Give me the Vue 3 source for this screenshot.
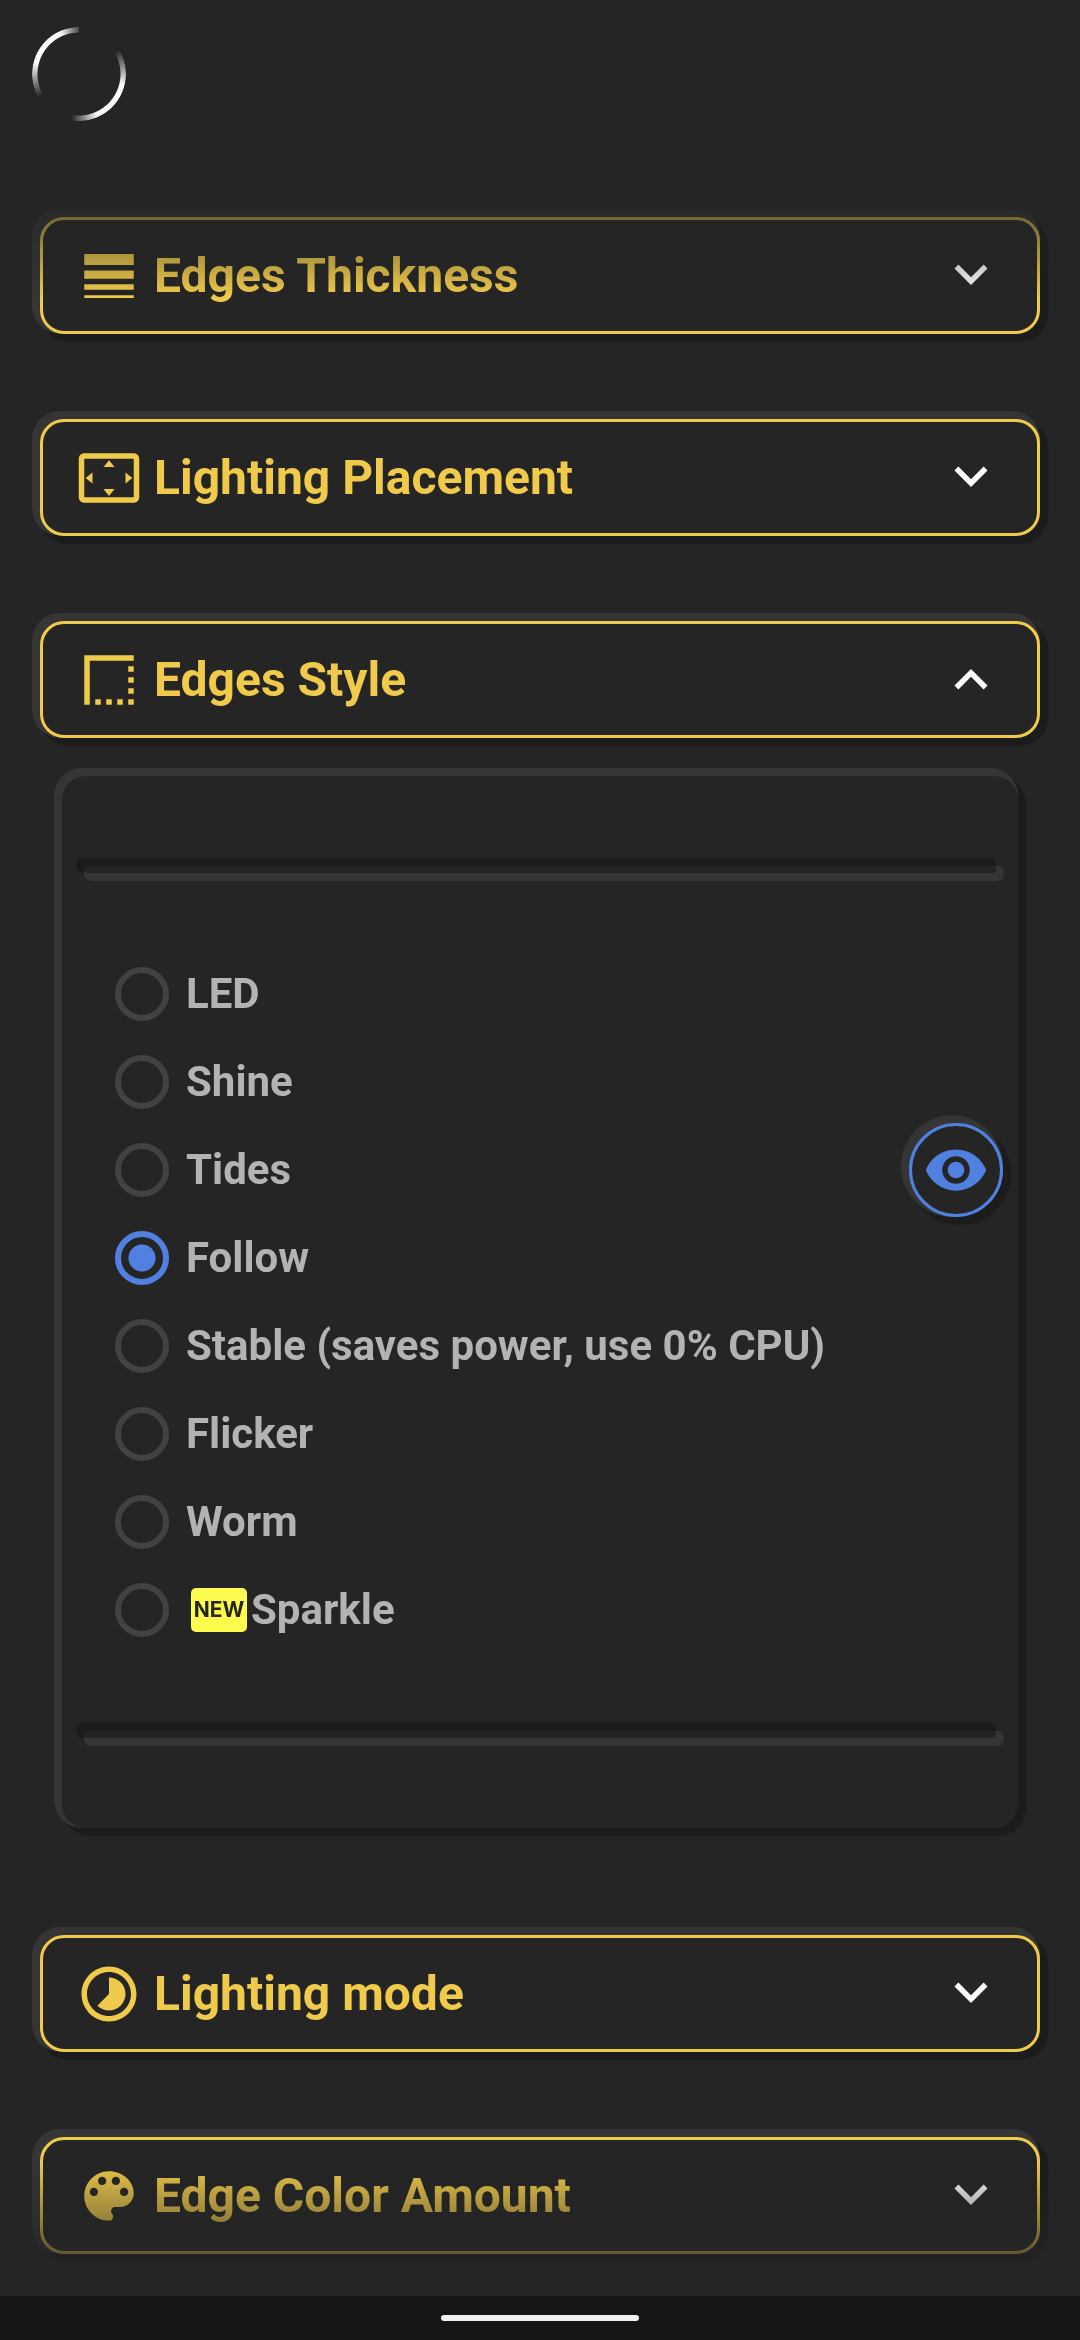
<script setup>
import { ref } from 'vue'

const icons = {
  thickness: 'M3 17h18v-2H3v2zm0 3h18v-1H3v1zm0-7h18v-3H3v3zm0-9v4h18V4H3z',
  placement:
    'M12.01 5.5L10 8h4l-1.99-2.5zM18 10v4l2.5-1.99L18 10zM6 10l-2.5 2.01L6 14v-4zm8 6h-4l2.01 2.5L14 16zm7-13H3c-1.1 0-2 .9-2 2v14c0 1.1.9 2 2 2h18c1.1 0 2-.9 2-2V5c0-1.1-.9-2-2-2zm0 16.01H3V4.99h18v14.02z',
  style:
    'M15 21h2v-2h-2v2zm4 0h2v-2h-2v2zM7 21h2v-2H7v2zm4 0h2v-2h-2v2zm8-4h2v-2h-2v2zm0-4h2v-2h-2v2zM3 3v18h2V5h16V3H3zm16 6h2V7h-2v2z',
  mode:
    'M16.24 7.76C15.07 6.59 13.54 6 12 6v6l-4.24 4.24c2.34 2.34 6.14 2.34 8.49 0 2.34-2.34 2.34-6.14-.01-8.48zM12 2C6.48 2 2 6.48 2 12s4.48 10 10 10 10-4.48 10-10S17.52 2 12 2zm0 18c-4.42 0-8-3.58-8-8s3.58-8 8-8 8 3.58 8 8-3.58 8-8 8z',
  palette:
    'M12 3c-4.97 0-9 4.03-9 9s4.03 9 9 9c.83 0 1.5-.67 1.5-1.5 0-.39-.15-.74-.39-1.01-.23-.26-.38-.61-.38-.99 0-.83.67-1.5 1.5-1.5H16c2.76 0 5-2.24 5-5 0-4.42-4.03-8-9-8zm-5.5 9c-.83 0-1.5-.67-1.5-1.5S5.67 9 6.5 9 8 9.67 8 10.5 7.33 12 6.5 12zm3-4C8.67 8 8 7.33 8 6.5S8.67 5 9.5 5s1.5.67 1.5 1.5S10.33 8 9.5 8zm5 0c-.83 0-1.5-.67-1.5-1.5S13.67 5 14.5 5s1.5.67 1.5 1.5S15.33 8 14.5 8zm3 4c-.83 0-1.5-.67-1.5-1.5S16.67 9 17.5 9s1.5.67 1.5 1.5-.67 1.5-1.5 1.5z',
  down: 'M7.41 7.84L12 12.42l4.59-4.58L18 9.25l-6 6-6-6z',
  up: 'M7.41 15.41L12 10.83l4.59 4.58L18 14l-6-6-6 6z',
  eye: 'M12 4.5C7 4.5 2.73 7.61 1 12c1.73 4.39 6 7.5 11 7.5s9.27-3.11 11-7.5c-1.73-4.39-6-7.5-11-7.5zM12 17c-2.76 0-5-2.24-5-5s2.24-5 5-5 5 2.24 5 5-2.24 5-5 5zm0-8c-1.66 0-3 1.34-3 3s1.34 3 3 3 3-1.34 3-3-1.34-3-3-3z',
}

const sections = [
  { id: 'thickness', title: 'Edges Thickness' },
  { id: 'placement', title: 'Lighting Placement' },
  { id: 'style', title: 'Edges Style' },
  { id: 'mode', title: 'Lighting mode' },
  { id: 'palette', title: 'Edge Color Amount' },
]

const styles = [
  { label: 'LED' },
  { label: 'Shine' },
  { label: 'Tides' },
  { label: 'Follow' },
  { label: 'Stable (saves power, use 0% CPU)' },
  { label: 'Flicker' },
  { label: 'Worm' },
  { label: 'Sparkle', isNew: true },
]

const open = ref('style')
const selected = ref('Follow')

function toggle(id) {
  open.value = open.value === id ? '' : id
}
</script>

<template>
  <div class="page">
    <header class="top">
      <div class="spinner" role="progressbar" aria-label="Loading"></div>
    </header>

    <main class="list">
      <section v-for="s in sections" :key="s.id" class="section">
        <button class="head" type="button" :aria-expanded="open === s.id" @click="toggle(s.id)">
          <svg class="icon" viewBox="0 0 24 24" aria-hidden="true"><path :d="icons[s.id]" /></svg>
          <span class="title">{{ s.title }}</span>
          <svg class="icon chevron" viewBox="0 0 24 24" aria-hidden="true">
            <path :d="open === s.id ? icons.up : icons.down" />
          </svg>
        </button>

        <div v-if="s.id === 'style' && open === 'style'" class="panel">
          <div class="groove"></div>
          <fieldset class="options" aria-label="Edges Style">
            <label v-for="o in styles" :key="o.label" class="option">
              <input v-model="selected" class="radio" type="radio" name="edge-style" :value="o.label" />
              <span v-if="o.isNew" class="badge">NEW</span>
              <span>{{ o.label }}</span>
            </label>
          </fieldset>
          <div class="groove"></div>
        </div>
      </section>
    </main>

    <button class="preview" type="button" aria-label="Preview">
      <svg class="icon" viewBox="0 0 24 24" aria-hidden="true"><path :d="icons.eye" /></svg>
    </button>

    <footer class="navbar"><div class="handle"></div></footer>
  </div>
</template>

<style>
body {
  background: #252525;
}
</style>

<style scoped>
.page {
  --base: #252525;
  --light: #353535;
  --dark: #1c1c1c;
  --gold: #f0cb4b;
  --blue: #5080e0;
  display: flex;
  flex-direction: column;
  min-height: 100vh;
  background: var(--base);
  font-family: Roboto, 'Noto Sans', sans-serif;
  font-weight: 700;
}

.page * {
  box-sizing: border-box;
}

.top {
  height: 162px;
  padding: 27px 32px;
}

.spinner {
  width: 94px;
  height: 94px;
  border-radius: 50%;
  background: conic-gradient(
    transparent 5deg,
    transparent 58deg,
    #fff 105deg,
    #fff 155deg,
    transparent 190deg,
    transparent 240deg,
    #fff 285deg,
    #fff 335deg,
    transparent 365deg
  );
  mask-image: radial-gradient(closest-side, transparent 41px, #000 42px);
}

.list {
  flex: 1;
  display: flex;
  flex-direction: column;
  gap: 85px;
  padding: 55px 40px 42px;
  mask-image: linear-gradient(transparent, #000 137px, #000 calc(100% - 137px), transparent);
}

.head {
  display: flex;
  align-items: center;
  gap: 12px;
  width: 100%;
  height: 117px;
  padding: 0 33px;
  border: 3px solid var(--gold);
  border-radius: 24px;
  background: var(--base);
  box-shadow: -4px -4px 0 4px var(--light), 4px 4px 1px 4px var(--dark);
  color: var(--gold);
  font: inherit;
  font-size: 48px;
  line-height: 60px;
  text-align: left;
}

.icon {
  flex: none;
  width: 66px;
  height: 66px;
  fill: currentColor;
}

.title {
  flex: 1;
}

.chevron {
  color: #fff;
}

.panel {
  margin: 38px 22px 22px;
  padding: 90px 22px;
  border-radius: 24px;
  background: var(--base);
  box-shadow: -4px -4px 0 4px var(--light), 4px 4px 1px 4px var(--dark);
}

.groove {
  height: 7px;
  border-radius: 3px;
  background: #232323;
  box-shadow: 4px 4px 0 4px var(--light), -4px -4px 1px 4px var(--dark);
}

.options {
  margin: 77px 0;
  padding: 0 31px;
  border: 0;
}

.option {
  display: flex;
  align-items: center;
  height: 88px;
  color: #b3b3b3;
  font-size: 42px;
  line-height: 52px;
}

.radio {
  appearance: none;
  flex: none;
  width: 54px;
  height: 54px;
  margin: 0 17px 0 0;
  border: 6px solid #424242;
  border-radius: 50%;
}

.radio:checked {
  border-color: var(--blue);
  background: radial-gradient(closest-side, var(--blue) 13px, transparent 14px);
}

.badge {
  width: 56px;
  height: 44px;
  margin: 0 4px 0 5px;
  border-radius: 5px;
  background: #fdfd50;
  color: #252510;
  font-family: Inter, sans-serif;
  font-size: 21px;
  line-height: 44px;
  text-align: center;
}

.preview {
  position: fixed;
  top: 50%;
  right: 77px;
  display: grid;
  place-items: center;
  width: 94px;
  height: 94px;
  padding: 0;
  border: 3px solid var(--blue);
  border-radius: 50%;
  background: var(--base);
  box-shadow: -4px -4px 1px 4px var(--light), 4px 4px 2px 4px var(--dark);
  color: var(--blue);
  transform: translateY(-50%);
}

.navbar {
  display: flex;
  justify-content: center;
  align-items: center;
  height: 44px;
  background: #151515;
}

.handle {
  width: 198px;
  height: 6px;
  border-radius: 3px;
  background: #f0f0f0;
}
</style>
